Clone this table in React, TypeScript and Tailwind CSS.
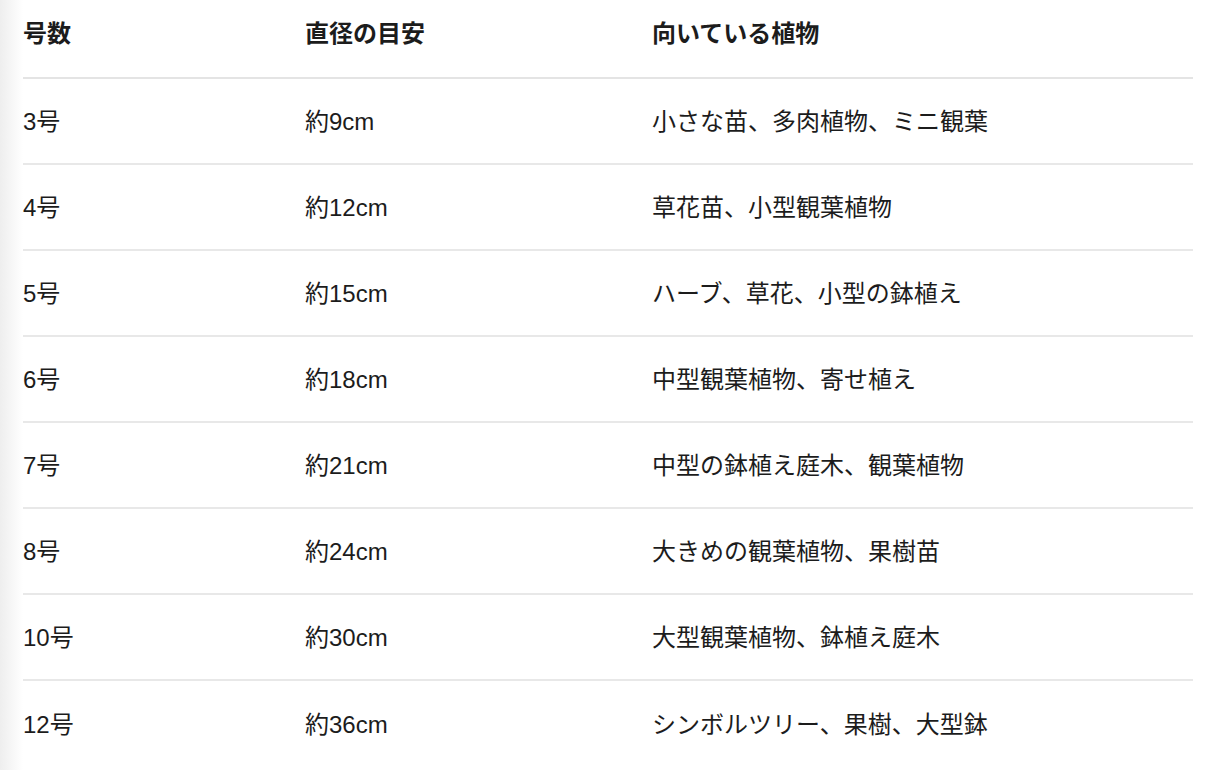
const rows = [
  { size: '3号', diameter: '約9cm', plants: '小さな苗、多肉植物、ミニ観葉' },
  { size: '4号', diameter: '約12cm', plants: '草花苗、小型観葉植物' },
  { size: '5号', diameter: '約15cm', plants: 'ハーブ、草花、小型の鉢植え' },
  { size: '6号', diameter: '約18cm', plants: '中型観葉植物、寄せ植え' },
  { size: '7号', diameter: '約21cm', plants: '中型の鉢植え庭木、観葉植物' },
  { size: '8号', diameter: '約24cm', plants: '大きめの観葉植物、果樹苗' },
  { size: '10号', diameter: '約30cm', plants: '大型観葉植物、鉢植え庭木' },
  { size: '12号', diameter: '約36cm', plants: 'シンボルツリー、果樹、大型鉢' },
]

export default function App() {
  return (
    <div
      className="flex min-h-[770px] w-[1208px] bg-white text-[#1c1c1c]"
      style={{ fontFamily: '"Liberation Sans", "Noto Sans CJK JP", sans-serif' }}
    >
      {/* faint shadow on the left edge */}
      <div className="w-[23px] shrink-0 bg-gradient-to-r from-[#eeeeee] to-white" />

      <div className="mr-[15px] flex-1">
        <div className="grid h-[79px] grid-cols-[282px_347px_1fr] items-center border-b-2 border-[#e4e4e4] pb-[9px] text-[24px] font-bold">
          <div>号数</div>
          <div>直径の目安</div>
          <div>向いている植物</div>
        </div>

        {rows.map((row, i) => (
          <div
            key={row.size}
            className={
              'grid h-[86px] grid-cols-[282px_347px_1fr] items-center pt-[2px] text-[24px] ' +
              (i < rows.length - 1 ? 'border-b-2 border-[#e8e8e8]' : '')
            }
          >
            <div>{row.size}</div>
            <div>{row.diameter}</div>
            <div>{row.plants}</div>
          </div>
        ))}
      </div>
    </div>
  )
}
